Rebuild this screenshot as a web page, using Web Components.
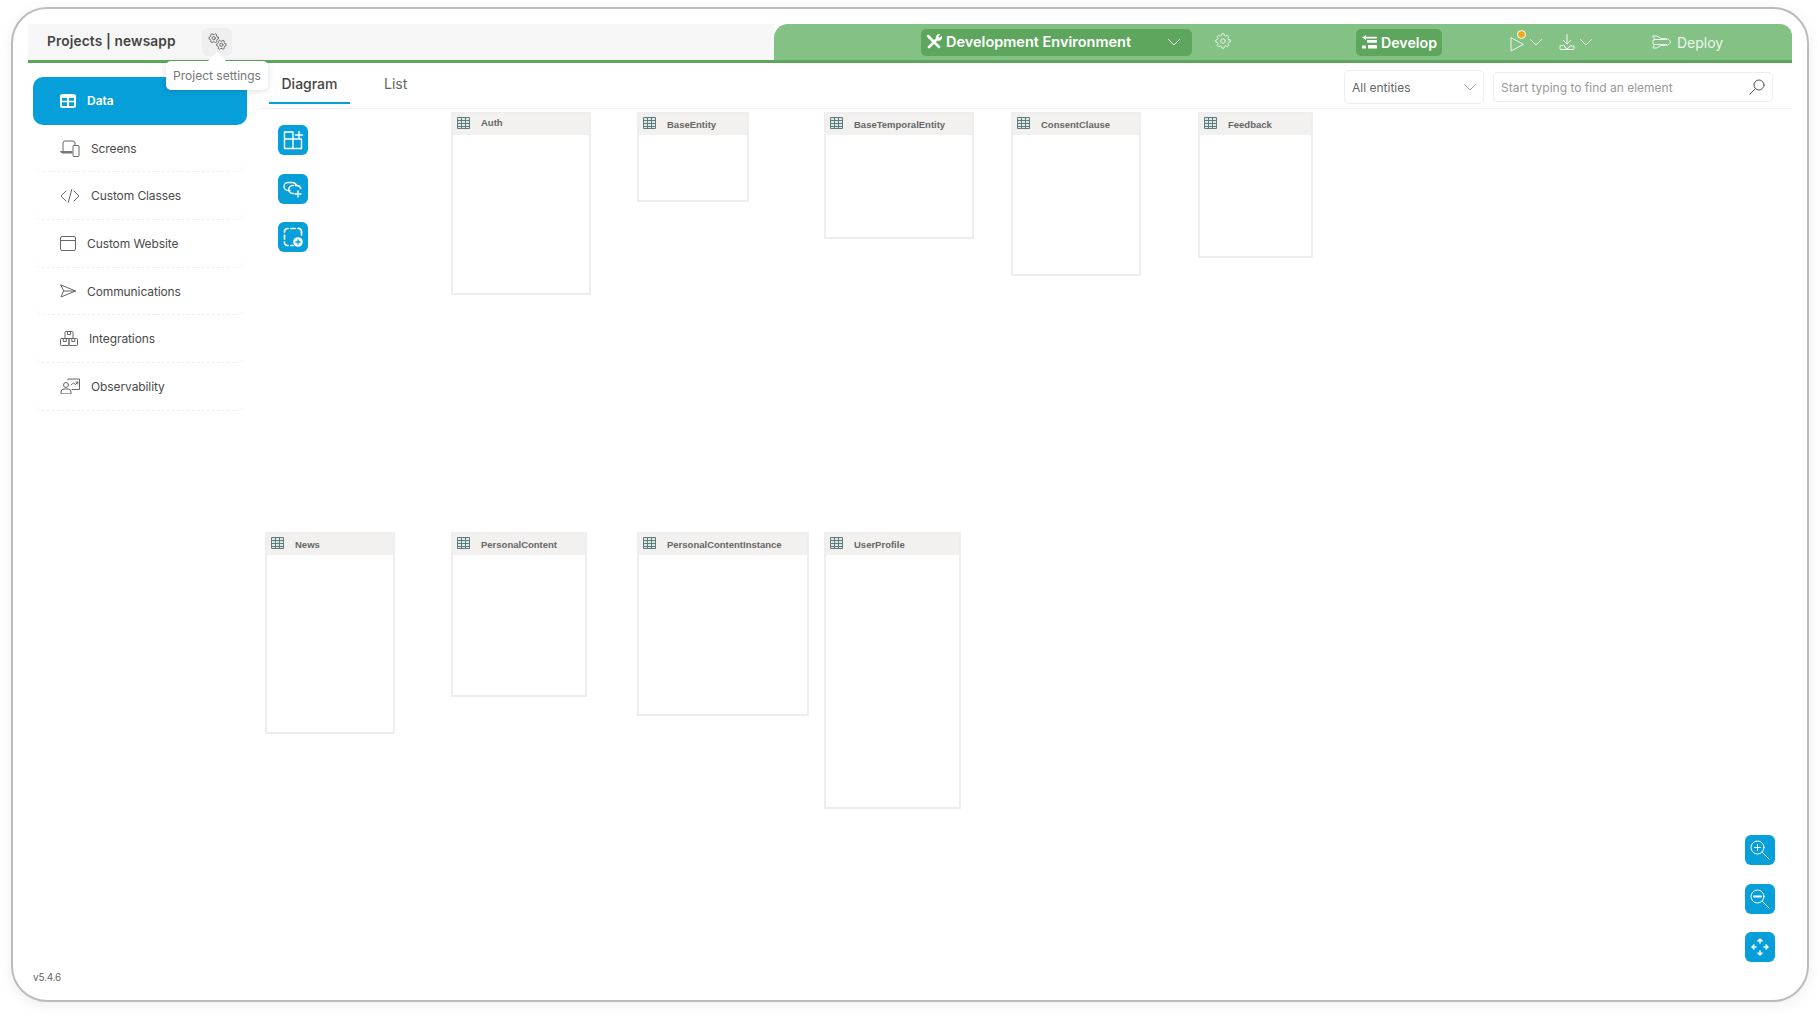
<!DOCTYPE html>
<html lang="en"><head><meta charset="utf-8"><title>Projects | newsapp</title>
<style>
html,body{margin:0;height:100%;background:#fff;overflow:hidden}
body{font-family:Inter,"Open Sans","Liberation Sans",sans-serif;color:#444;padding:7px 11px 14px;box-sizing:border-box;width:1820px;height:1016px}
</style></head><body>
<app-frame>
  <top-bar slot="top"></top-bar>
  <side-nav slot="side">
    <nav-item icon="data" active>Data</nav-item>
    <nav-item icon="screens">Screens</nav-item>
    <nav-item icon="code">Custom Classes</nav-item>
    <nav-item icon="website">Custom Website</nav-item>
    <nav-item icon="send">Communications</nav-item>
    <nav-item icon="boxes">Integrations</nav-item>
    <nav-item icon="observe">Observability</nav-item>
  </side-nav>
  <work-pane slot="main">
    <tab-bar slot="tabs"></tab-bar>
    <entity-node x="191" y="3" w="140" h="183" ty="-2">Auth</entity-node>
    <entity-node x="377" y="3" w="112" h="90">BaseEntity</entity-node>
    <entity-node x="564" y="3" w="150" h="127">BaseTemporalEntity</entity-node>
    <entity-node x="751" y="3" w="130" h="164">ConsentClause</entity-node>
    <entity-node x="938" y="3" w="115" h="146">Feedback</entity-node>
    <entity-node x="5" y="423" w="130" h="202">News</entity-node>
    <entity-node x="191" y="423" w="136" h="165">PersonalContent</entity-node>
    <entity-node x="377" y="423" w="172" h="184">PersonalContentInstance</entity-node>
    <entity-node x="564" y="423" w="137" h="277">UserProfile</entity-node>
    <tool-stack style="left:18px;top:16px">
      <tool-button icon="addtable" title="Add entity"></tool-button>
      <tool-button icon="addlink" title="Add relation"></tool-button>
      <tool-button icon="addgroup" title="Add group"></tool-button>
    </tool-stack>
    <tool-stack style="right:17px;bottom:23px">
      <tool-button icon="zoomin" title="Zoom in"></tool-button>
      <tool-button icon="zoomout" title="Zoom out"></tool-button>
      <tool-button icon="fit" title="Fit"></tool-button>
    </tool-stack>
  </work-pane>
</app-frame>
<script>
const gear=(cx,cy,r1,r2,n)=>{let d='';const s=Math.PI/n;for(let i=0;i<n*2;i++){const r=i%2?r2:r1;const a=i*s;const pts=[a-s*.32,a+s*.32];pts.forEach((t,j)=>{d+=(d?'L':'M')+(cx+r*Math.cos(t)).toFixed(2)+' '+(cy+r*Math.sin(t)).toFixed(2)})}return d+'Z'};
const svg=(w,h,vb,body,extra='')=>`<svg width="${w}" height="${h}" viewBox="${vb}" fill="none" stroke="currentColor" stroke-linecap="round" stroke-linejoin="round" ${extra||'stroke-width="1"'}>${body}</svg>`;
const ICONS={
 data:svg(16,14,'0 0 16 14',`<path fill="currentColor" stroke="none" fill-rule="evenodd" d="M2.5 0h11A2.5 2.5 0 0 1 16 2.5v9a2.5 2.5 0 0 1-2.5 2.5h-11A2.5 2.5 0 0 1 0 11.500v-9A2.500 2.500 0 0 1 2.500 0ZM2 4v2.800h5V4Zm7 0v2.800h5V4ZM2 8.300V12h5V8.300Zm7 0V12h5V8.300Z"/>`),
 screens:svg(20,17,'0 0 20 17',`<path d="M3 11V3a2 2 0 0 1 2-2h8a2 2 0 0 1 2 2v2"/><path d="M1 11.500h11v1.500H2.500A1.500 1.500 0 0 1 1 11.500Z" fill="#777" stroke="#777"/><rect x="13" y="5.500" width="6" height="11" rx="1"/>`),
 code:svg(20,14,'0 0 20 14',`<path d="M6 2 1 7l5 5M14 2l5 5-5 5M11.800 0.500 8.200 13.500"/>`),
 website:svg(16,15,'0 0 16 15',`<rect x=".5" y=".5" width="15" height="14" rx="1.500"/><path d="M.5 4.500h15"/>`),
 send:svg(16,14,'0 0 16 14',`<path d="M1 1l14.500 6L1 13l2.500-6Zm2.500 6h12"/>`),
 boxes:svg(18,15,'0 0 18 15',`<rect x="5" y=".5" width="8" height="7" rx="1"/><rect x=".5" y="7.500" width="8.500" height="7" rx="1"/><rect x="9" y="7.500" width="8.500" height="7" rx="1"/><path d="M7.500 1v2.500h3V1M3.300 8v2.500h3V8M11.800 8v2.500h3V8"/>`),
 observe:svg(20,16,'0 0 20 16',`<path d="M8 2V1h11.500v10.500H12"/><circle cx="6" cy="7" r="2.500"/><path d="M1 15.500v-1.500a3 3 0 0 1 3-3h4a3 3 0 0 1 3 3v1.500ZM11 7l2.500-2 2 1.500 2.200-2.500M15.800 4h2v2"/>`),
 gears:svg(19,19,'0 0 20 19',`<path d="${gear(6,6,5,3.900,6)}"/><circle cx="6" cy="6" r="1.700"/><path d="${gear(14,13,5,3.900,6)}"/><circle cx="14" cy="13" r="1.700"/>`),
 tools:svg(16,16,'0 0 16 16',`<path stroke-width="2.600" stroke-linecap="butt" d="M2.200 13.800 11 5M3.500 3.500 13.700 13.700"/><path fill="currentColor" stroke="none" d="M9.700 3.300a3.300 3.300 0 0 1 4.600-2.900L12.200 2.500l1.300 1.300 2.100-2.100A3.300 3.300 0 0 1 11.500 6.500ZM.5 2 2 .5l3 2.300v1.800L4.600 5H2.800Z"/>`),
 cog:svg(16,16,'0 0 16 16',`<path d="${gear(8,8,7.300,5.600,8)}"/><circle cx="8" cy="8" r="2.300"/>`),
 develop:svg(15,14,'0 0 15 14',`<g fill="currentColor" stroke="none"><path d="M0 2.500 4 0v1.700h11v1.700H4V5Z"/><rect x="5" y="5" width="10" height="2.700" rx=".6"/><rect x="0" y="10.500" width="4" height="3" rx=".6"/><rect x="6" y="10" width="9" height="3.500" rx=".6"/></g>`),
 play:svg(18,20,'0 0 18 20',`<path d="M1 6v13l12-6.500Z"/>`),
 chev:svg(12,7,'0 0 12 7',`<path d="M.5.500 6 6 11.500.500"/>`),
 download:svg(16,16,'0 0 16 16',`<path d="M8 .5v9.500M4.500 6.500 8 10l3.500-3.500M1 12v2.500a1 1 0 0 0 1 1h12a1 1 0 0 0 1-1V12H10.500a2.500 2.500 0 0 1-5 0Z"/>`),
 rocket:svg(19,14,'0 0 19 14',`<path d="M1 1h4l4 2.500h4.500c2.500 0 5 2 5 3.500s-2.500 3.500-5 3.500H9L5 13H1l1.500-3.500L1 9V5l1.500-.5ZM2.500 4.500h12M2.500 9.500h12"/>`),
 search:svg(16,16,'0 0 16 16',`<circle cx="10" cy="6" r="5"/><path d="M6.300 9.700.8 15.300"/>`),
 table:svg(13,12,'0 0 13 12',`<g stroke="#5e7c7c" stroke-linecap="butt"><rect x=".5" y=".5" width="12" height="11" fill="#dfe8e8"/><path d="M.5 3.500h12M.5 6.500h12M.5 9.500h12M4.500.5v11M8.500.5v11"/></g>`),
 addtable:svg(20,20,'0 0 20 20',`<path d="M10 9V2H1.500v7ZM10 9H1.500v9.500H10ZM10 9h8.500v9.500H10ZM12.500 5h7M16 1.500v7"/>`,'stroke-width="1.400"'),
 addlink:svg(20,18,'0 0 20 18',`<path d="M7 10.500H5a4 4 0 0 1 0-8h4.500a4 4 0 0 1 3.800 3"/><path d="M12.500 5.500h1.500a4 4 0 0 1 3.800 3M10.500 13.500H10a4 4 0 0 1-.5-8h1"/><path d="M15 11v6M12 14h6"/>`,'stroke-width="1.400"'),
 addgroup:svg(20,20,'0 0 20 20',`<path d="M5 1.500h-.500a3 3 0 0 0-3 3V5M8 1.500h4M15 1.500a3 3 0 0 1 3.500 3V8M1.500 8v4M1.500 15a3 3 0 0 0 3 3.500H5M8 18.500h2" stroke-width="1.700"/><circle cx="15" cy="15" r="4.800" fill="#fff" stroke="none"/><path d="M12.800 15h4.400M15 12.800v4.400" stroke="#069fd9" stroke-width="1.300"/>`),
 zoomin:svg(20,20,'0 0 20 20',`<circle cx="7.500" cy="7.500" r="6.500"/><path d="M12.500 12.500 19 19M4.500 7.500h6M7.500 4.500v6"/>`),
 zoomout:svg(20,20,'0 0 20 20',`<circle cx="7.500" cy="7.500" r="6.500"/><path d="M12.500 12.500 19 19M4 7.500h7" /><path d="M4 7.500h7" stroke-width="1.800"/>`),
 fit:svg(18,18,'0 0 18 18',`<path d="M9 1v4M7 3l2-2 2 2M9 17v-4M7 15l2 2 2-2M1 9h4M3 7 1 9l2 2M17 9h-4M15 7l2 2-2 2" stroke-width="1.500"/>`)
};
const def=(name,css,html)=>customElements.define(name,class extends HTMLElement{
  connectedCallback(){if(this.shadowRoot)return;const r=this.attachShadow({mode:'open'});
    r.innerHTML=`<style>${css}</style>`+(typeof html==='function'?html(this):html);}
});
def('app-frame',`:host{display:flex;flex-direction:column;box-sizing:border-box;width:1798px;height:995px;padding:15px;background:#fff;border:2px solid #bcbcbc;border-radius:36px;box-shadow:0 3px 14px rgba(0,0,0,.07);position:relative}
 .body{flex:1;display:flex;min-height:0}`,
 `<slot name="top"></slot><div class="body"><slot name="side"></slot><slot name="main"></slot></div>`);
def('top-bar',`:host{display:flex;height:39px;box-sizing:border-box;border-bottom:3px solid #5ca65c;flex:none;position:relative}
 .left{width:746px;background:#f7f7f7;display:flex;align-items:center;padding-left:19px;box-sizing:border-box;position:relative}
 .title{font-weight:600;font-size:13.700px;letter-spacing:.14px;color:#444;width:136px;white-space:nowrap;position:relative;top:-1px}
 .gbtn{width:30px;height:28px;margin-left:19px;margin-top:-1px;background:#efefef;border-radius:6px;display:flex;align-items:center;justify-content:center;color:#666}
 .tip{position:absolute;left:138px;top:37px;width:102px;height:29px;background:#fff;border-radius:5px;box-shadow:0 1px 6px rgba(0,0,0,.14);font-size:12px;color:#777;display:flex;align-items:center;justify-content:center;white-space:nowrap;z-index:5}
 .tip::before{content:"";position:absolute;left:42px;top:-9px;border:9px solid transparent;border-top:0;border-bottom-color:#fff}
 .right{flex:1;background:#84c184;border-radius:14px 12px 0 0;display:flex;align-items:center;color:#fff}
 .env{margin-left:147px;width:271px;height:27px;background:#5ea65e;border-radius:5px;display:flex;align-items:center;padding:0 12px 0 5px;box-sizing:border-box;font-weight:600;font-size:14.500px;white-space:nowrap}
 .env span{margin-left:4px;flex:1;position:relative;top:-1px}
 .cog{margin-left:23px;display:flex;color:#e4f2e4;position:relative;top:-1px}
 .dev{margin-left:125px;width:86px;height:27px;background:#5ea65e;border-radius:5px;display:flex;align-items:center;padding-left:6px;box-sizing:border-box;gap:4px;font-weight:600;font-size:14.200px}
 .ic{display:flex;align-items:center;color:#f0f8f0;position:relative}
 .play{margin-left:68px;gap:2px}.dl{margin-left:17px;gap:5px}
 .dot{position:absolute;left:7px;top:-2px;width:7px;height:7px;border-radius:50%;background:#f0a91e;border:1.500px solid #fff}
 .deploy{margin-left:60px;display:flex;align-items:center;gap:6px;font-size:14px;color:#eef7ee}
 `,`<div class="left"><span class="title">Projects | newsapp</span><div class="gbtn">${ICONS.gears}</div><div class="tip" role="tooltip">Project settings</div></div>
 <div class="right"><div class="env">${ICONS.tools}<span>Development Environment</span>${ICONS.chev}</div>
 <div class="cog">${ICONS.cog}</div>
 <div class="dev">${ICONS.develop}<span>Develop</span></div>
 <div class="ic play">${ICONS.play}<i class="dot"></i>${ICONS.chev}</div>
 <div class="ic dl">${ICONS.download}${ICONS.chev}</div>
 <div class="deploy">${ICONS.rocket}<span>Deploy</span></div></div>`);
def('side-nav',`:host{display:flex;flex-direction:column;width:214px;margin:14px 13px 0 5px;flex:none}
 .v{margin-top:auto;margin-bottom:2px;font-size:10px;color:#666;letter-spacing:-.2px}`,`<slot></slot><div class="v">v5.4.6</div>`);
def('nav-item',`:host{display:flex;align-items:center;gap:11px;height:47.700px;box-sizing:border-box;padding-left:27px;font-size:12px;letter-spacing:-.1px;border-bottom:1px dashed #eee;border-radius:0 0 10px 10px;color:#4a4a4a}
 :host([active]){background:#069fd9;color:#fff;font-weight:600;border-radius:10px;border-bottom:0;letter-spacing:0}
 .i{display:flex;color:#666}:host([active]) .i{color:#fff}`,
 h=>`<span class="i">${ICONS[h.getAttribute('icon')]}</span><slot></slot>`);
def('work-pane',`:host{flex:1;display:flex;flex-direction:column;min-width:0}
 .canvas{flex:1;position:relative;min-height:0}`,`<slot name="tabs"></slot><div class="canvas"><slot></slot></div>`);
def('tab-bar',`:host{display:flex;height:46px;box-sizing:border-box;border-bottom:1px solid #f0f0f0;padding:0 19px 0 9px;flex:none}
 .t{height:41px;display:flex;align-items:center;justify-content:center;box-sizing:border-box;font-size:14px;padding-top:1px}
 .a{width:81px;font-weight:500;color:#444;border-bottom:2px solid #069fd9}
 .l{margin-left:34px;color:#666;font-weight:400;height:39px}
 .sp{flex:1}
 .sel{width:140px;height:34px;margin-top:7px;border:1px solid #eee;border-radius:5px;display:flex;align-items:center;justify-content:space-between;padding:0 7px;box-sizing:border-box;font-size:12px;color:#666}
 .sel svg{color:#aaa}
 .q{width:280px;height:30px;margin:9px 0 0 9px;border:1px solid #eee;border-radius:4px;display:flex;align-items:center;justify-content:space-between;padding:0 7px;box-sizing:border-box;font-size:12px;color:#999}
 .q svg{color:#555}`,`<div class="t a">Diagram</div><div class="t l">List</div><div class="sp"></div>
 <div class="sel"><span>All entities</span>${ICONS.chev}</div><div class="q"><span>Start typing to find an element</span>${ICONS.search}</div>`);
def('entity-node',`:host{position:absolute;box-sizing:border-box;border:2px solid #eeeeee;background:#fff;display:block}
 .h{height:21px;background:#f2f1f0;display:flex;align-items:center;font:700 9.500px "Liberation Sans",Arial,sans-serif;color:#666;white-space:nowrap;padding-left:4px}
 .h svg{margin-top:-3px}.h span{margin-left:11px;position:relative;top:var(--ty,0)}`,
 h=>{h.style.left=h.getAttribute('x')+'px';h.style.top=h.getAttribute('y')+'px';h.style.width=h.getAttribute('w')+'px';h.style.height=h.getAttribute('h')+'px';if(h.getAttribute('ty'))h.style.setProperty('--ty',h.getAttribute('ty')+'px');
  return `<div class="h">${ICONS.table}<span><slot></slot></span></div>`});
def('tool-stack',`:host{position:absolute;display:flex;flex-direction:column;gap:18.500px;z-index:2}`,`<slot></slot>`);
def('tool-button',`:host{display:flex;width:30px;height:30px;background:#069fd9;border-radius:6px;color:#fff;align-items:center;justify-content:center}`,
 h=>ICONS[h.getAttribute('icon')]);
</script>
</body></html>
